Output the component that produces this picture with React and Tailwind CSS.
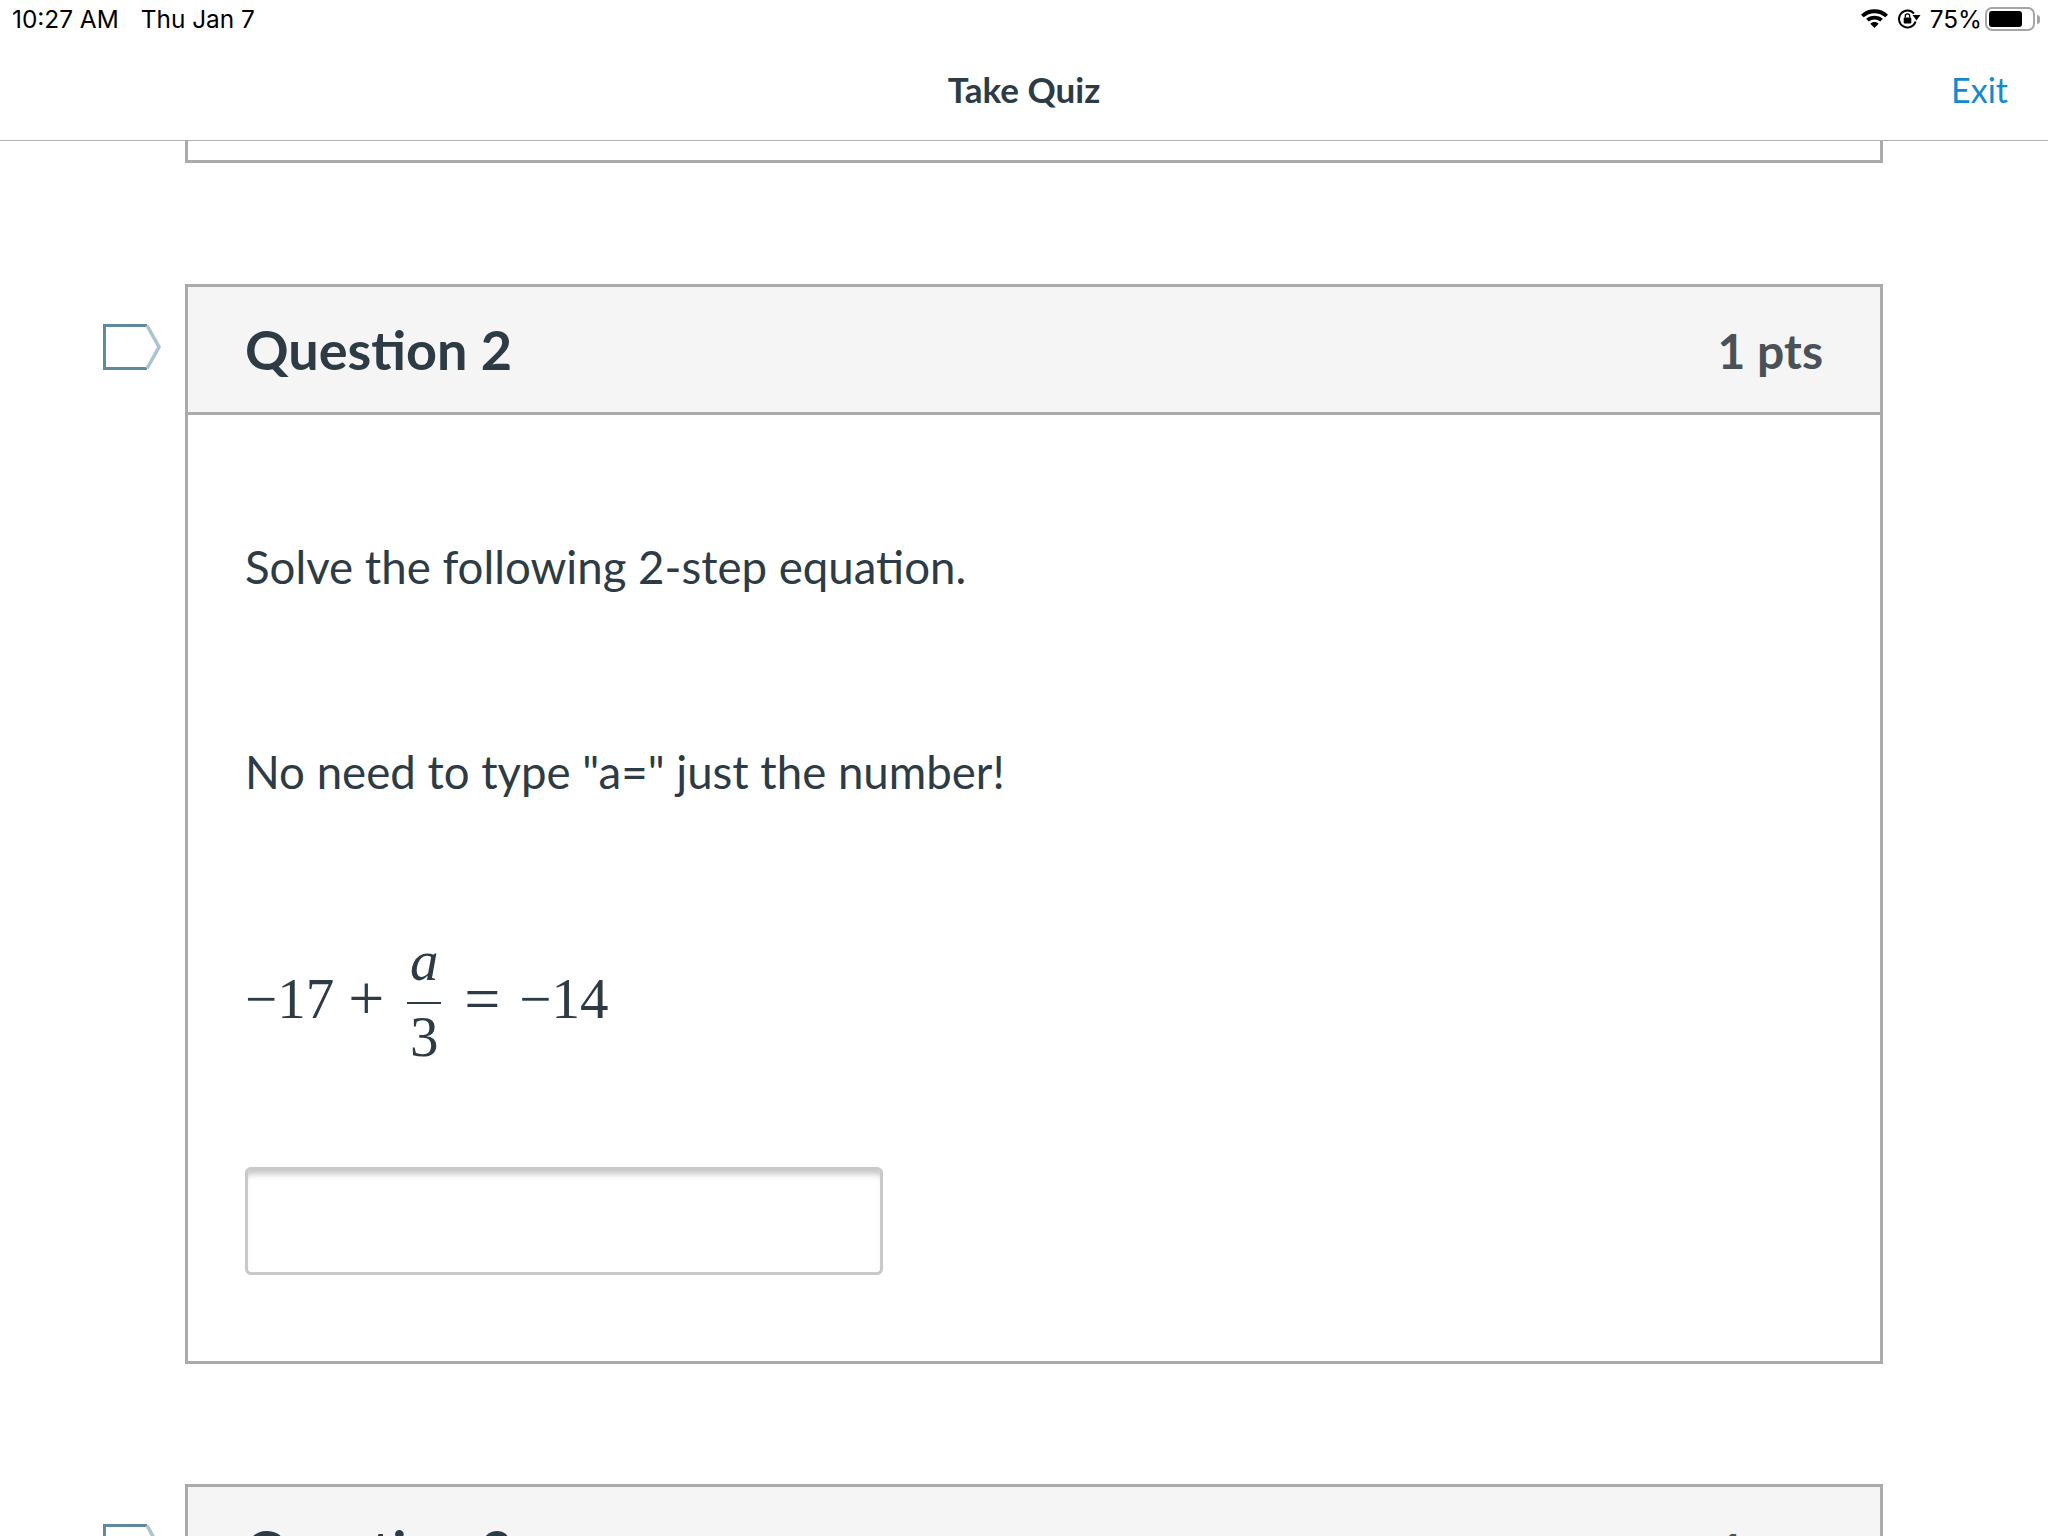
import React from "react";

const lato = "font-['Lato','Liberation_Sans',sans-serif]";

function WifiIcon() {
  return (
    <svg width="27" height="20" viewBox="0 0 28 22" preserveAspectRatio="none" className="block">
      <path d="M14 .4C8.7.4 3.8 2.5 0 6.2l2.8 3C6 6.2 9.8 4.6 14 4.6s8 1.6 11.2 4.6l2.8-3C24.2 2.5 19.3.4 14 .4z" fill="#000" />
      <path d="M14 7.4c-3.3 0-6.3 1.2-8.7 3.4l2.8 3c1.6-1.4 3.6-2.2 5.9-2.2s4.3.8 5.9 2.2l2.8-3c-2.4-2.2-5.4-3.4-8.7-3.4z" fill="#000" />
      <path d="M14 14.4c-1.7 0-3.2.6-4.3 1.7l4.3 4.9 4.3-4.9c-1.1-1.1-2.6-1.7-4.3-1.7z" fill="#000" />
    </svg>
  );
}

function RotationLockIcon() {
  return (
    <svg width="23" height="20" viewBox="0 0 23 20" className="block">
      <path d="M16 4.5A8.5 8.5 0 1 0 17.6 12.5" fill="none" stroke="#000" strokeWidth="2" />
      <path d="M14.5 6H22.5L18.5 11.5z" fill="#000" />
      <rect x="5.7" y="8.5" width="7.6" height="6" rx="1" fill="#000" />
      <path d="M7.3 8.5V7a2.2 2.2 0 0 1 4.4 0v1.5" fill="none" stroke="#000" strokeWidth="1.3" />
    </svg>
  );
}

function Battery() {
  return (
    <div className="ml-[3px] flex items-center gap-[2px]">
      <div className="h-[24px] w-[50px] rounded-[7px] border-2 border-[#a5a5a5] p-[2px]">
        <div className="h-full w-[33px] rounded-[3px] bg-black" />
      </div>
      <div className="h-[9px] w-[3px] rounded-r-full bg-[#a5a5a5]" />
    </div>
  );
}

function TagIcon() {
  return (
    <svg width="58" height="46" viewBox="0 0 58 46" className="block">
      <path d="M44 1.5 L1.5 1.5 L1.5 44.5 L44 44.5" fill="none" stroke="#5f8a9c" strokeWidth="3" />
      <path d="M44 1.5 L56 23 L44 44.5" fill="none" stroke="#a9c3d1" strokeWidth="3.5" />
    </svg>
  );
}

function Fraction() {
  return (
    <span className="mx-[23px] inline-flex w-[34px] flex-col items-center leading-none">
      <span className="mb-[13px] h-[57px] italic">a</span>
      <span className="h-[2px] w-[34px] bg-[#2d3b45]" />
      <span className="box-content h-[57px] pt-[4px]">3</span>
    </span>
  );
}

function QuestionHeader({ title, points }) {
  return (
    <div className="flex h-[128px] items-center justify-between border-b-[3px] border-[#ababab] bg-[#f5f5f5] px-[57px]">
      <h2 className={`${lato} text-[54px] font-bold leading-none text-[#2d3b45]`}>{title}</h2>
      <span className={`${lato} mt-[2px] text-[48px] font-bold leading-none text-[#4a5258]`}>{points}</span>
    </div>
  );
}

function QuestionCard({ title, points, children }) {
  return (
    <section className="relative border-[3px] border-[#ababab]">
      <div className="absolute left-[-85px] top-[37px]">
        <TagIcon />
      </div>
      <QuestionHeader title={title} points={points} />
      {children}
    </section>
  );
}

export default function App() {
  return (
    <div className="h-[1536px] w-[2048px] overflow-hidden bg-white">
      <header className="h-[141px] border-b border-[#b0b0b0] bg-white">
        <div className="flex h-[38px] items-center justify-between pl-[12px] pr-[8px] pt-[1px] font-['Inter','Liberation_Sans',sans-serif] text-[24.4px] text-black">
          <div className="flex gap-[22px]">
            <span>10:27 AM</span>
            <span>Thu Jan 7</span>
          </div>
          <div className="flex items-center">
            <WifiIcon />
            <div className="ml-[10px] mr-[9px]">
              <RotationLockIcon />
            </div>
            <span>75%</span>
            <Battery />
          </div>
        </div>
        <div className={`${lato} relative flex h-[102px] items-center justify-center`}>
          <span className="text-[35px] font-bold text-[#2d3b45]">Take Quiz</span>
          <a className="absolute right-[40px] text-[34px] text-[#0f8bd0]">Exit</a>
        </div>
      </header>

      <main className="ml-[185px] w-[1698px]">
        <div className="h-[22px] border-x-[3px] border-b-[3px] border-[#ababab]" />
        <div className="h-[121px]" />
        <QuestionCard title="Question 2" points="1 pts">
          <div className={`${lato} px-[57px] text-[45.6px] leading-none text-[#2d3b45]`}>
            <p className="pt-[129px]">Solve the following 2-step equation.</p>
            <p className="pt-[159px]">No need to type "a=" just the number!</p>
            <div className="mt-[138px] flex items-center font-['Liberation_Serif',serif] text-[57px] leading-none">
              <span>−17</span>
              <span className="ml-[14px] text-[64px]">+</span>
              <Fraction />
              <span className="text-[64px]">=</span>
              <span className="ml-[19px]">−14</span>
            </div>
            <div className="mb-[86px] mt-[102px] h-[108px] w-[638px] rounded-[6px] border-[3px] border-[#c9c9c9] shadow-[inset_0_8px_6px_-4px_#c4c4c4]" />
          </div>
        </QuestionCard>
        <div className="h-[120px]" />
        <QuestionCard title="Question 3" points="1 pts" />
      </main>
    </div>
  );
}
